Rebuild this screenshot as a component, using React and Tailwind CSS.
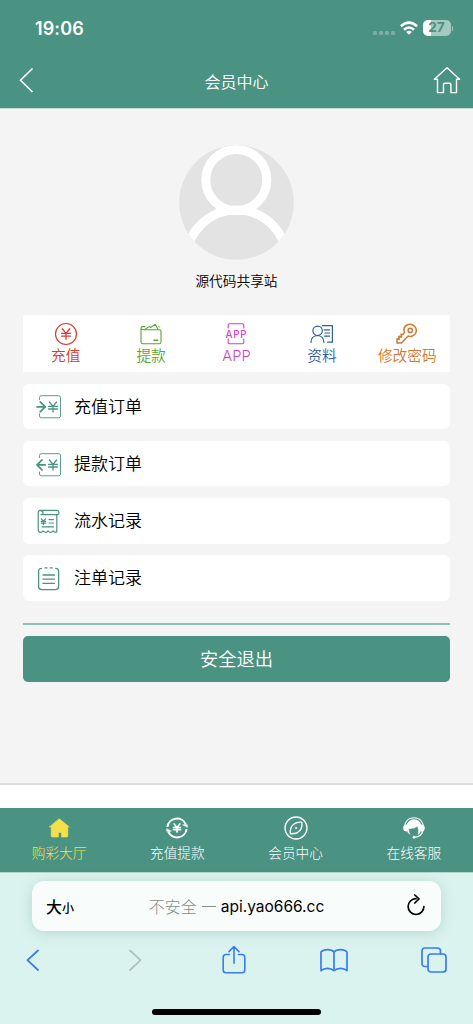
import React from "react";

const yen = "M-3.6 -5 L0 -0.6 L3.6 -5 M0 -0.6 V5 M-4.4 -0.6 H4.4 M-4.4 2 H4.4";

function Svg({ w, h, children, className = "", stroke = 1.2 }) {
  return (
    <svg
      width={w}
      height={h}
      viewBox={`0 0 ${w} ${h}`}
      fill="none"
      stroke="currentColor"
      strokeWidth={stroke}
      strokeLinecap="round"
      strokeLinejoin="round"
      className={`block shrink-0 ${className}`}
    >
      {children}
    </svg>
  );
}

const shortcuts = [
  {
    label: "充值",
    color: "text-[#e2382c]",
    icon: (
      <Svg w={24} h={24} stroke={1.2}>
        <circle cx="12" cy="12" r="10.5" />
        <path d={yen} transform="translate(12 12) scale(1.05)" />
      </Svg>
    ),
  },
  {
    label: "提款",
    color: "text-[#58a52f]",
    icon: (
      <Svg w={24} h={24} stroke={1.1}>
        <path d="M2 6.5 V20 Q2 21.8 3.8 21.8 H20.2 Q22 21.8 22 20 V9.5 Q22 7.7 20.2 7.7 H3.8 Q2 7.7 2 6 Q2 4.6 3.5 4.6 H6 M6 7.2 L10.3 4.6 L12 5.4 L16.3 2.3 L19 7.4 M20 4.6 V4.9" />
        <path d="M15 18.2 H18.5" strokeWidth="1.6" />
      </Svg>
    ),
  },
  {
    label: "APP",
    color: "text-[#d43fbd]",
    icon: (
      <Svg w={24} h={24} stroke={1.1}>
        <path d="M4.2 6 V3.2 Q4.2 1.7 5.7 1.7 H18.3 Q19.8 1.7 19.8 3.2 V6 M4.2 17 V20.2 Q4.2 21.7 5.7 21.7 H18.3 Q19.8 21.7 19.8 20.2 V17" />
        <text
          x="12.4"
          y="15.5"
          textAnchor="middle"
          fontSize="9.8"
          fontFamily="Inter, sans-serif"
          fontWeight="500"
          letterSpacing="0.8"
          fill="currentColor"
          stroke="none"
        >
          APP
        </text>
      </Svg>
    ),
  },
  {
    label: "资料",
    color: "text-[#2d6099]",
    icon: (
      <Svg w={24} h={24} stroke={1.2}>
        <circle cx="7.6" cy="8.8" r="4.7" />
        <path d="M1 20.5 Q1 14 7.6 13.5 Q13.5 14 14 20.5 M12.2 3.7 H22.4 V20.2 H17.6 M14 7.8 H19.5 M15 11 H19.5 M14.5 14.2 H19.5" />
      </Svg>
    ),
  },
  {
    label: "修改密码",
    color: "text-[#d5782f]",
    icon: (
      <Svg w={24} h={24} stroke={1.5}>
        <circle cx="15.2" cy="8.4" r="2.1" />
        <path d="M9.4 10.5 Q7.8 5.2 11.8 3 Q16.2 1 19.6 4.2 Q22.6 7.6 20.4 11.6 Q17.8 15.3 13.1 14.1 L6.4 21 H2 V16.8 L4.2 17.3 L3.8 14.2 L6.6 15 L6 12.2 L8 12.4 Z" />
      </Svg>
    ),
  },
];

const records = [
  {
    label: "充值订单",
    icon: (
      <Svg w={26} h={26}>
        <path
          d="M3.5 5.5 V3.5 Q3.5 1.7 5.3 1.7 H22.7 Q24.5 1.7 24.5 3.5 V22 Q24.5 23.8 22.7 23.8 H5.3 Q3.5 23.8 3.5 22 V20"
          strokeWidth="0.9"
        />
        <path d="M1 12.8 H9.2 M4.2 7.8 L9.3 12.8 L4.2 17.8" strokeWidth="1.7" />
        <path d={yen} transform="translate(17 13)" strokeWidth="1.3" />
      </Svg>
    ),
  },
  {
    label: "提款订单",
    icon: (
      <Svg w={26} h={26}>
        <path
          d="M3.5 5.5 V3.5 Q3.5 1.7 5.3 1.7 H22.7 Q24.5 1.7 24.5 3.5 V22 Q24.5 23.8 22.7 23.8 H5.3 Q3.5 23.8 3.5 22 V20"
          strokeWidth="0.9"
        />
        <path d="M9.2 12.8 H1 M6 7.8 L1 12.8 L6 17.8" strokeWidth="1.7" />
        <path d={yen} transform="translate(17 13)" strokeWidth="1.3" />
      </Svg>
    ),
  },
  {
    label: "流水记录",
    icon: (
      <Svg w={26} h={26}>
        <path d="M5 5.6 H21.5 Q23.2 5.2 23 3.3 Q22.8 1.4 21 1.4 H4.5 Q2.2 1.6 2.2 4 V20.5 Q2.2 23.3 4.5 23.3 Q6 23.3 7 21.8 Q8.5 23.3 10 23.3 Q11 23.3 12 21.8 Q13.3 23.3 14.7 23.3 Q16 23.3 17 21.8 Q18 23.3 20.8 23 V6 M5 1.6 Q7.5 2 7 5.4" />
        <path d="M5.3 9.8 L7.5 12 L9.7 9.8 M7.5 12 V15.6 M5.3 12.4 H9.7 M5.3 14.2 H9.7 M13 10.6 H17.5 M13 14 H17.5 M6 17.8 H17.5" />
      </Svg>
    ),
  },
  {
    label: "注单记录",
    icon: (
      <Svg w={26} h={26} stroke={1.3}>
        <path d="M5.5 2.4 Q2.6 2.4 2.6 5.2 V20.5 Q2.6 23.6 5.7 23.6 H19.6 Q22.6 23.6 22.6 20.5 V5.2 Q22.6 2.4 19.8 2.4 M9 1.9 H11 M14.2 1.9 H16.2 M7 9 H18.4 M7 13.2 H18.4 M7 17.4 H18.4" />
      </Svg>
    ),
  },
];

const tabs = [
  {
    label: "购彩大厅",
    color: "text-[#f6e04a]",
    icon: (
      <Svg w={24} h={24}>
        <path
          d="M12.4 2.8 L22.3 11 H20.8 V19.7 Q20.8 21 19.5 21 H14.5 V17.2 Q14.5 16.6 13.9 16.6 H12 Q11.4 16.6 11.4 17.2 V21 H5.4 Q4.2 21 4.2 19.7 V11 H2.5 Z"
          fill="currentColor"
          strokeWidth="0.6"
        />
      </Svg>
    ),
  },
  {
    label: "充值提款",
    color: "text-white",
    icon: (
      <Svg w={24} h={24} stroke={2}>
        <path
          d="M2.4 11 A9.6 9.6 0 0 1 20.8 8.5 M21.6 13 A9.6 9.6 0 0 1 3.2 15.5"
          strokeLinecap="butt"
        />
        <path d="M18 8.8 H22.3 V11 Z M6 15.2 H1.7 V13 Z" fill="currentColor" strokeWidth="0.6" />
        <path d={yen} transform="translate(12 12) scale(0.8)" strokeWidth="2.1" />
      </Svg>
    ),
  },
  {
    label: "会员中心",
    color: "text-white",
    icon: (
      <Svg w={24} h={24} stroke={1.3}>
        <circle cx="12" cy="12" r="11" />
        <path d="M17.8 6.2 Q18.8 13.5 13.8 16.3 Q10.5 18 6.3 17.7 Q5.6 11.5 10 8 Q13 5.8 17.8 6.2 Z" />
        <circle cx="12" cy="12" r="0.8" fill="currentColor" strokeWidth="0.5" />
      </Svg>
    ),
  },
  {
    label: "在线客服",
    color: "text-white",
    icon: (
      <Svg w={24} h={24} stroke={1.1}>
        <path d="M2.9 8.5 A9.6 9.8 0 0 1 21.1 8.5" />
        <path
          d="M5 8.5 Q7 3.6 12 3.6 Q17 3.6 19 8.5 V14 Q18.2 17 16.2 18.5 Q17.2 14.2 15.6 10.2 Q12.5 13 6.6 12.6 Q6.6 15.8 8 18.5 Q5.2 16.5 5 14 Z"
          fill="currentColor"
          strokeWidth="0.4"
        />
        <path d="M4.6 9 Q1.8 9 1.8 12 Q1.8 15 4.6 15 Z M19.4 9 Q22.2 9 22.2 12 Q22.2 15 19.4 15 Z" fill="currentColor" />
        <path d="M20.8 15 Q19.5 20.4 13 21.2" />
        <circle cx="12" cy="21.2" r="1.2" fill="currentColor" strokeWidth="0.4" />
      </Svg>
    ),
  },
];

function StatusBar() {
  return (
    <div className="flex h-[52px] items-start justify-between pt-[16px] pr-[20px] pl-[35px] font-[Inter,sans-serif]">
      <span className="text-[18px] leading-[25px] font-semibold tracking-[0.1px]">19:06</span>
      <div className="flex items-center pt-[4px]">
        <div className="mt-[9px] mr-[5px] flex gap-[2px] opacity-25">
          <i className="size-[4px] rounded-[1px] bg-white" />
          <i className="size-[4px] rounded-[1px] bg-white" />
          <i className="size-[4px] rounded-[1px] bg-white" />
          <i className="size-[4px] rounded-[1px] bg-white" />
        </div>
        <Svg w={18} h={14} stroke={2.5} className="mr-[5px]">
          <path d="M0.9 5.2 Q9 -2 17.1 5.2 M4 8.7 Q9 4.2 14 8.7" strokeLinecap="butt" />
          <path d="M6.2 10.9 Q9 8.6 11.8 10.9 L9 13.8 Z" fill="currentColor" stroke="none" />
        </Svg>
        <div className="flex h-[16px] w-[28px] items-center justify-center rounded-[5px] bg-linear-to-r from-white from-27% to-[#a4c9c0] to-27% text-[13.5px] leading-none font-bold text-[#4a9382]">
          27
        </div>
        <i className="ml-[1px] h-[5px] w-[1.5px] rounded-r-full bg-[#a4c9c0]" />
      </div>
    </div>
  );
}

function Header() {
  return (
    <header className="h-[108px] bg-[#4a9382] text-white">
      <StatusBar />
      <div className="flex h-[56px] items-center justify-between pr-[12px] pl-[19px]">
        <Svg w={28} h={26} stroke={1.6}>
          <path d="M13.5 1.5 L1.5 13.2 L13.5 25" strokeLinecap="butt" strokeLinejoin="miter" />
        </Svg>
        <h1 className="pt-[2px] pr-[7px] text-[16px] font-[350]">会员中心</h1>
        <Svg w={28} h={28} stroke={1.4}>
          <path d="M14 1.8 L26.6 13.2 H23.5 V26.6 H17.9 V18.6 Q17.9 17.2 16.5 17.2 H11.9 Q10.5 17.2 10.5 18.6 V26.6 H4.5 V13.2 H1.4 Z" />
        </Svg>
      </div>
    </header>
  );
}

function Avatar() {
  return (
    <svg width="115" height="115" viewBox="0 0 115 115" className="mx-auto block">
      <clipPath id="avatar">
        <circle cx="57.5" cy="57.5" r="57.3" />
      </clipPath>
      <g clipPath="url(#avatar)">
        <rect width="115" height="115" fill="#e3e3e3" />
        <g fill="none" stroke="#fff" strokeWidth="9">
          <circle cx="57.3" cy="35" r="30.5" />
          <circle cx="57.5" cy="115.5" r="50.5" />
        </g>
      </g>
    </svg>
  );
}

function SafariBar() {
  return (
    <footer className="flex h-[152px] flex-col border-t border-[#b5d6cf] bg-[#dbf3ee] pt-[8px]">
      <div className="mx-[32px] flex h-[50px] shrink-0 items-center justify-between rounded-[12px] bg-[#f8fdfc] pr-[15px] pl-[14px] text-black shadow-[0_2px_14px_rgba(60,120,105,0.22)]">
        <div className="flex w-[46px] items-baseline font-medium">
          <span className="text-[16px]">大</span>
          <span className="text-[12px]">小</span>
        </div>
        <div className="flex items-center">
          <span className="text-[16px] font-light text-[#858c8a]">不安全</span>
          <span className="ml-[5px] h-px w-[14px] bg-[#858c8a]" />
          <span className="ml-[5px] pt-[2px] font-[Inter,sans-serif] text-[15.5px]">api.yao666.cc</span>
        </div>
        <Svg w={20} h={24} stroke={1.7} className="ml-[25px]">
          <path d="M10 4.7 A7.9 7.9 0 1 0 17.9 12.6 M8.8 1 L13 4.9 L8.8 9" />
        </Svg>
      </div>
      <div className="flex h-[57px] items-center justify-between pr-[25px] pl-[26px] text-[#387cf6]">
        <Svg w={14} h={24} stroke={1.8}>
          <path d="M12 2.5 L1.5 12.2 L12 22" />
        </Svg>
        <Svg w={14} h={24} stroke={1.8} className="ml-[62px] text-[#b0c0bc]">
          <path d="M2 2.5 L12.5 12.2 L2 22" />
        </Svg>
        <Svg w={24} h={30} stroke={1.6} className="ml-[54px]">
          <path d="M7.5 9.5 H4 Q1.2 9.5 1.2 12.3 V25 Q1.2 27.7 4 27.7 H20 Q22.8 27.7 22.8 25 V12.3 Q22.8 9.5 20 9.5 H16.5 M12 18.2 V2 M7 6.6 L12 1.6 L17 6.6" />
        </Svg>
        <Svg w={28} h={24} stroke={1.7} className="ml-[48px]">
          <path d="M14 4 Q12 1.6 7.5 1.6 Q3 1.6 1 4 V22.6 Q3.5 20.3 7.5 20.3 Q11.5 20.3 14 22.6 Q16.5 20.3 20.5 20.3 Q24.5 20.3 27 22.6 V4 Q25 1.6 20.5 1.6 Q16 1.6 14 4 Z M14 4 V22.6" />
        </Svg>
        <Svg w={27} h={26} stroke={1.7} className="ml-[47px]">
          <rect x="7" y="7" width="18" height="18" rx="3" />
          <path d="M7 19.5 H4 Q1 19.5 1 16.5 V4 Q1 1 4 1 H16.5 Q19.5 1 19.5 4 V7" />
        </Svg>
      </div>
      <div className="mx-auto mt-[20.5px] h-[6px] w-[169px] rounded-full bg-black" />
    </footer>
  );
}

function App() {
  return (
    <div className="flex h-[1024px] w-[473px] flex-col overflow-hidden bg-white font-['Noto_Sans_CJK_SC',sans-serif]">
      <Header />
      <main className="h-[677px] border-t border-b-2 border-t-[#c5dcd6] border-b-[#dcdcdc] bg-[#f4f4f4] px-[23px] pt-[36px]">
        <Avatar />
        <p className="mt-[9px] text-center text-[13.7px] leading-[22px] font-[350] text-black">
          源代码共享站
        </p>
        <div className="mt-[24px] grid h-[57px] grid-cols-5 bg-white pt-[7px]">
          {shortcuts.map((item) => (
            <a key={item.label} className={`flex flex-col items-center ${item.color}`}>
              {item.icon}
              <span className="mt-px font-[Inter,'Noto_Sans_CJK_SC',sans-serif] text-[14.7px] leading-[18px] font-[350] whitespace-nowrap">
                {item.label}
              </span>
            </a>
          ))}
        </div>
        <ul className="mt-[11.5px] flex flex-col gap-[11.5px]">
          {records.map((item) => (
            <li
              key={item.label}
              className="flex h-[45.7px] items-center rounded-[6px] bg-white pl-[13px] text-[17px] text-black"
            >
              <span className="pt-[2px] text-[#4a9382]">{item.icon}</span>
              <span className="ml-[12px] pb-[2px] font-[350]">{item.label}</span>
            </li>
          ))}
        </ul>
        <div className="mt-[22.5px] h-[2px] bg-[#8fbeb2]" />
        <button className="mt-[11px] h-[46px] w-full rounded-[5px] bg-[#4a9382] pb-[1px] text-[18.3px] font-[350] text-white">
          安全退出
        </button>
      </main>
      <nav className="mt-[23px] grid h-[64px] grid-cols-4 bg-[#4a9382] pt-[8px]">
        {tabs.map((tab) => (
          <a key={tab.label} className={`flex flex-col items-center ${tab.color}`}>
            {tab.icon}
            <span className="mt-[3px] text-[13.7px] leading-[19px] font-light">{tab.label}</span>
          </a>
        ))}
      </nav>
      <SafariBar />
    </div>
  );
}

export default App;
